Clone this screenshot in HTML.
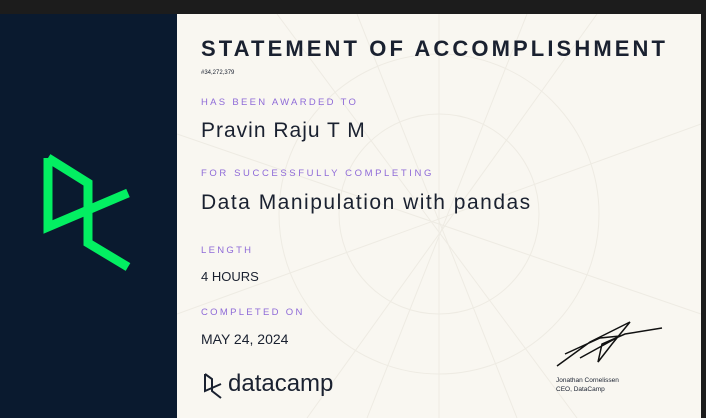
<!DOCTYPE html><html><head><style>
body{margin:0;width:706px;height:418px;overflow:hidden;background:#1c1c1c;font-family:"Liberation Sans",sans-serif;position:relative}
.l{position:absolute;left:0;top:14px;width:177px;height:404px;background:#0a1a2f}
.r{position:absolute;left:177px;top:14px;width:524px;height:404px;background:#f9f7f1}
.t{position:absolute;white-space:nowrap;color:#1a2130}
.p{color:#8f6bd8;font-size:9.5px;letter-spacing:2.3px}
</style></head><body>
<div class="l"></div><div class="r">
<svg width="524" height="404" style="position:absolute;left:0;top:0" stroke="#eeebe3" fill="none" stroke-width="1">
<circle cx="262" cy="200" r="100"/><circle cx="262" cy="200" r="160"/>
<line x1="262" y1="0" x2="262" y2="404"/><line x1="100" y1="0" x2="400" y2="404"/><line x1="420" y1="0" x2="130" y2="404"/><line x1="0" y1="120" x2="524" y2="300"/><line x1="0" y1="300" x2="524" y2="110"/><line x1="180" y1="0" x2="340" y2="404"/><line x1="350" y1="0" x2="190" y2="404"/>
</svg></div>
<svg width="177" height="300" style="position:absolute;left:0;top:0">
<path d="M48 158 V227 L128 193 M48 158 L88 183 V243 L128 267" stroke="#03ef62" stroke-width="9" fill="none" stroke-linejoin="miter"/>
</svg>
<div class="t" style="left:201px;top:36px;font-size:22px;font-weight:bold;letter-spacing:3.1px">STATEMENT OF ACCOMPLISHMENT</div>
<div class="t" style="left:201px;top:70px;font-size:6px">#34,272,379</div>
<div class="t p" style="left:201px;top:97px">HAS BEEN AWARDED TO</div>
<div class="t" style="left:201px;top:119px;font-size:21px;letter-spacing:1px">Pravin Raju T M</div>
<div class="t p" style="left:201px;top:168px;letter-spacing:2.6px">FOR SUCCESSFULLY COMPLETING</div>
<div class="t" style="left:201px;top:191px;font-size:21px;letter-spacing:1.5px">Data Manipulation with pandas</div>
<div class="t p" style="left:201px;top:245px">LENGTH</div>
<div class="t" style="left:201px;top:269px;font-size:13px">4 HOURS</div>
<div class="t p" style="left:201px;top:307px">COMPLETED ON</div>
<div class="t" style="left:201px;top:331px;font-size:14px">MAY 24, 2024</div>
<svg width="30" height="30" style="position:absolute;left:201px;top:371px"><path d="M4 3 V20 L20 13 M4 3 L11 8 V20 L20 27" stroke="#1a2130" stroke-width="2" fill="none"/></svg>
<div class="t" style="left:228px;top:370px;font-size:24px">datacamp</div>
<svg width="120" height="60" style="position:absolute;left:550px;top:314px"><path d="M7 52 L40 28 L60 18 L80 8 L62 30 L48 48 L52 30 L75 20 L112 14 M15 40 L50 24 L70 22 L30 44" stroke="#111" stroke-width="1.5" fill="none"/></svg>
<div class="t" style="left:556px;top:376px;font-size:6.5px;line-height:9px">Jonathan Cornelissen<br>CEO, DataCamp</div>
</body></html>
